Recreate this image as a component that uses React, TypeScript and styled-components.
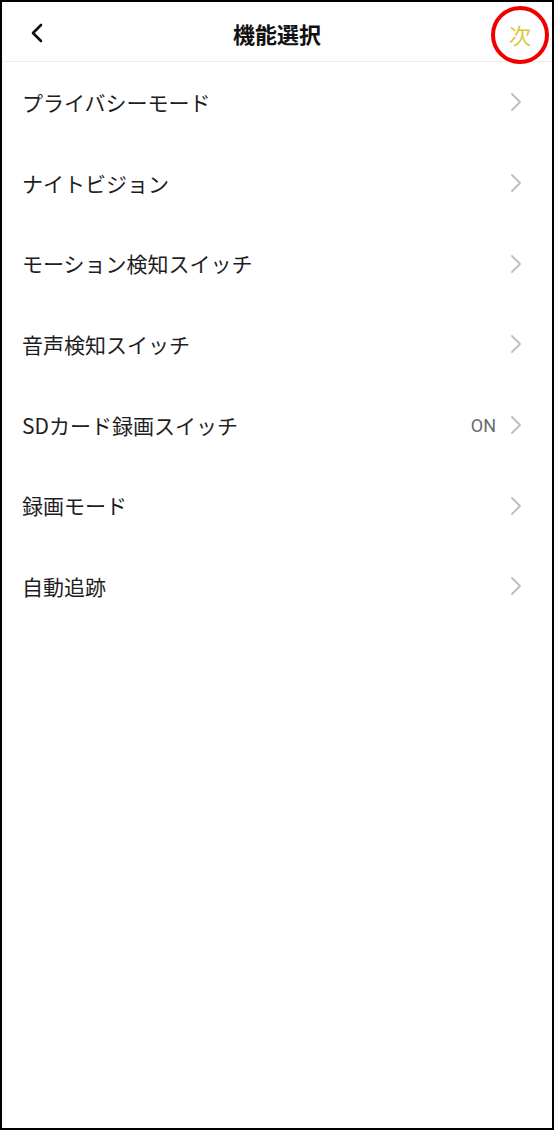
import styled, { createGlobalStyle } from "styled-components";

const GlobalStyle = createGlobalStyle`
  html, body {
    margin: 0;
    padding: 0;
    background: #fff;
  }
  * {
    box-sizing: border-box;
  }
`;

const items: { label: string; value?: string }[] = [
  { label: "プライバシーモード" },
  { label: "ナイトビジョン" },
  { label: "モーション検知スイッチ" },
  { label: "音声検知スイッチ" },
  { label: "SDカード録画スイッチ", value: "ON" },
  { label: "録画モード" },
  { label: "自動追跡" },
];

function Chevron({ color, size }: { color: string; size: number }) {
  return (
    <svg width={size * 0.6} height={size} viewBox="0 0 12 20" fill="none">
      <path d="M2 2 L10 10 L2 18" stroke={color} strokeWidth="1.8" strokeLinecap="round" strokeLinejoin="round" />
    </svg>
  );
}

export default function App() {
  return (
    <>
      <GlobalStyle />
      <Screen>
        <Header>
          <BackButton>
            <svg width="14" height="22" viewBox="0 0 14 22" fill="none">
              <path d="M11 3 L3 11 L11 19" stroke="#111" strokeWidth="2.6" strokeLinecap="round" strokeLinejoin="round" />
            </svg>
          </BackButton>
          <Title>機能選択</Title>
          <NextButton>
            次
            <Highlight />
          </NextButton>
        </Header>
        <List>
          {items.map((item) => (
            <Row key={item.label}>
              <Label>{item.label}</Label>
              <Trailing>
                {item.value && <Value>{item.value}</Value>}
                <Chevron color="#bdbdbd" size={20} />
              </Trailing>
            </Row>
          ))}
        </List>
      </Screen>
    </>
  );
}

const Screen = styled.div`
  width: 554px;
  height: 1130px;
  border: 2px solid #000;
  background: #fff;
  font-family: "Noto Sans CJK JP", "Noto Sans", sans-serif;
  display: flex;
  flex-direction: column;
`;

const Header = styled.header`
  height: 60px;
  display: grid;
  grid-template-columns: 70px 1fr 70px;
  align-items: center;
  border-bottom: 1px solid #eeeeee;
`;

const BackButton = styled.div`
  display: flex;
  align-items: center;
  padding-left: 28px;
  padding-top: 3px;
`;

const Title = styled.h1`
  margin: 0;
  text-align: center;
  font-size: 22px;
  font-weight: 700;
  color: #111;
  line-height: 1;
  padding-top: 2px;
`;

const NextButton = styled.div`
  position: relative;
  justify-self: end;
  margin-right: 3px;
  width: 58px;
  height: 58px;
  display: flex;
  align-items: center;
  justify-content: center;
  padding-top: 4px;
  font-size: 22px;
  color: #d6c93a;
  line-height: 1;
`;

const Highlight = styled.span`
  position: absolute;
  top: 3px;
  bottom: -3px;
  left: 0;
  right: 0;
  border: 4px solid #f00000;
  border-radius: 50%;
`;

const List = styled.ul`
  list-style: none;
  margin: 0;
  padding: 0;
`;

const Row = styled.li`
  height: 80.7px;
  display: flex;
  align-items: center;
  justify-content: space-between;
  padding: 0 30px 0 20px;
`;

const Label = styled.span`
  font-size: 21px;
  color: #1e1e1e;
  line-height: 1;
`;

const Trailing = styled.div`
  display: flex;
  align-items: center;
  gap: 14px;
`;

const Value = styled.span`
  font-family: Roboto, "Noto Sans", sans-serif;
  font-size: 18px;
  color: #6b6b6b;
`;
